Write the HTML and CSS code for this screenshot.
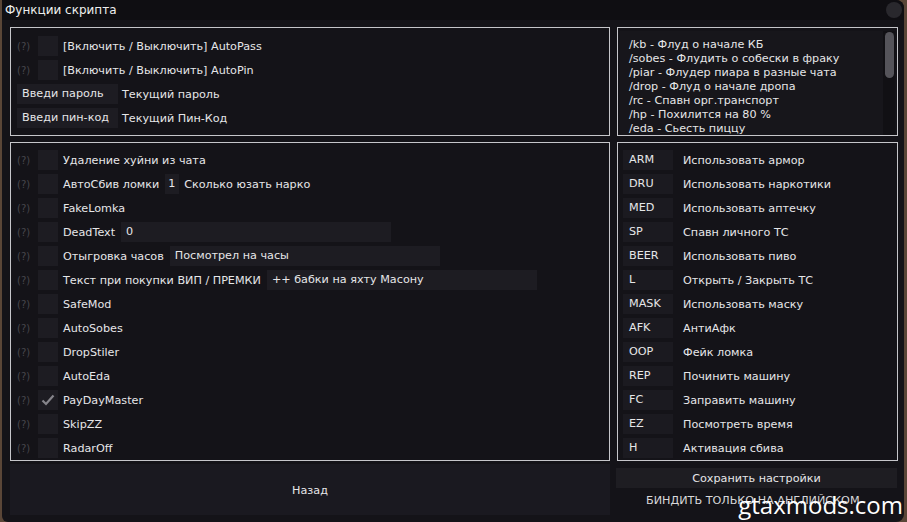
FILE: index.html
```html
<!DOCTYPE html>
<html lang="ru">
<head>
<meta charset="utf-8">
<title>Функции скрипта</title>
<link rel="stylesheet" href="styles.css">
</head>
<body>
<div class="window">
  <div class="titlebar">
    <span class="title">Функции скрипта</span>
    <span class="close"></span>
  </div>
  <div class="content">
    <section class="panel panel-auth">
      <div class="row"><span class="help">(?)</span><span class="check"></span><span class="label">[Включить / Выключить] AutoPass</span></div>
      <div class="row"><span class="help">(?)</span><span class="check"></span><span class="label">[Включить / Выключить] AutoPin</span></div>
      <div class="row"><span class="field field-short">Введи пароль</span><span class="label">Текущий пароль</span></div>
      <div class="row"><span class="field field-short">Введи пин-код</span><span class="label">Текущий Пин-Код</span></div>
    </section>

    <section class="panel panel-cmds">
      <div class="cmd-child">
        <div class="cmd-text">
          <div>/kb - Флуд о начале КБ</div>
          <div>/sobes - Флудить о собески в фраку</div>
          <div>/piar - Флудер пиара в разные чата</div>
          <div>/drop - Флуд о начале дропа</div>
          <div>/rc - Спавн орг.транспорт</div>
          <div>/hp - Похилится на 80 %</div>
          <div>/eda - Сьесть пиццу</div>
        </div>
        <div class="scrollbar"><div class="thumb"></div></div>
      </div>
    </section>

    <section class="panel panel-funcs">
      <div class="row"><span class="help">(?)</span><span class="check"></span><span class="label">Удаление хуйни из чата</span></div>
      <div class="row"><span class="help">(?)</span><span class="check"></span><span class="label">АвтоСбив ломки</span><span class="field field-num">1</span><span class="label">Сколько юзать нарко</span></div>
      <div class="row"><span class="help">(?)</span><span class="check"></span><span class="label">FakeLomka</span></div>
      <div class="row"><span class="help">(?)</span><span class="check"></span><span class="label">DeadText</span><span class="field field-wide">0</span></div>
      <div class="row"><span class="help">(?)</span><span class="check"></span><span class="label">Отыгровка часов</span><span class="field field-wide">Посмотрел на часы</span></div>
      <div class="row"><span class="help">(?)</span><span class="check"></span><span class="label">Текст при покупки ВИП / ПРЕМКИ</span><span class="field field-wide">++ бабки на яхту Масону</span></div>
      <div class="row"><span class="help">(?)</span><span class="check"></span><span class="label">SafeMod</span></div>
      <div class="row"><span class="help">(?)</span><span class="check"></span><span class="label">AutoSobes</span></div>
      <div class="row"><span class="help">(?)</span><span class="check"></span><span class="label">DropStiler</span></div>
      <div class="row"><span class="help">(?)</span><span class="check"></span><span class="label">AutoEda</span></div>
      <div class="row"><span class="help">(?)</span><span class="check checked"><svg viewBox="0 0 20 20" width="20" height="20"><polyline points="4.5,10.5 8,14 15.5,5.5" fill="none" stroke="#86858b" stroke-width="2.2"/></svg></span><span class="label">PayDayMaster</span></div>
      <div class="row"><span class="help">(?)</span><span class="check"></span><span class="label">SkipZZ</span></div>
      <div class="row"><span class="help">(?)</span><span class="check"></span><span class="label">RadarOff</span></div>
    </section>

    <section class="panel panel-binds">
      <div class="row"><span class="key">ARM</span><span class="label">Использовать армор</span></div>
      <div class="row"><span class="key">DRU</span><span class="label">Использовать наркотики</span></div>
      <div class="row"><span class="key">MED</span><span class="label">Использовать аптечку</span></div>
      <div class="row"><span class="key">SP</span><span class="label">Спавн личного ТС</span></div>
      <div class="row"><span class="key">BEER</span><span class="label">Использовать пиво</span></div>
      <div class="row"><span class="key">L</span><span class="label">Открыть / Закрыть ТС</span></div>
      <div class="row"><span class="key">MASK</span><span class="label">Использовать маску</span></div>
      <div class="row"><span class="key">AFK</span><span class="label">АнтиАфк</span></div>
      <div class="row"><span class="key">OOP</span><span class="label">Фейк ломка</span></div>
      <div class="row"><span class="key">REP</span><span class="label">Починить машину</span></div>
      <div class="row"><span class="key">FC</span><span class="label">Заправить машину</span></div>
      <div class="row"><span class="key">EZ</span><span class="label">Посмотреть время</span></div>
      <div class="row"><span class="key">H</span><span class="label">Активация сбива</span></div>
    </section>

    <button class="btn btn-back">Назад</button>
    <div class="save-col">
      <button class="btn btn-save">Сохранить настройки</button>
      <div class="note">БИНДИТЬ ТОЛЬКО НА АНГЛИЙСКОМ</div>
    </div>
  </div>
  <div class="watermark">gtaxmods.com</div>
</div>
</body>
</html>
```

FILE: styles.css
```css
* {
  box-sizing: border-box;
  margin: 0;
  padding: 0;
}

html,
body {
  width: 907px;
  height: 522px;
  overflow: hidden;
}

body {
  background: #5a4637;
  font-family: "DejaVu Sans", Verdana, sans-serif;
  font-size: 11.2px;
  color: #e6e6e8;
}

.window {
  position: relative;
  margin-left: 2px;
  width: 902px;
  height: 522px;
  background: #141318;
  border-radius: 0 8px 8px 6px;
  overflow: hidden;
}

.titlebar {
  height: 20px;
  background: #0f0e12;
  display: flex;
  align-items: center;
  justify-content: space-between;
  padding: 0 2px 0 3px;
}

.title {
  font-size: 12px;
  color: #eeeeee;
}

.close {
  width: 16px;
  height: 16px;
  border-radius: 50%;
  background: #29282d;
}

.content {
  display: grid;
  grid-template-columns: 600px 281px;
  column-gap: 7px;
  padding: 7px 0 0 8px;
}

.panel {
  border: 1px solid #c6c6ca;
  overflow: hidden;
}

.panel-auth {
  height: 109px;
  padding: 8px 6px 6px;
}

.panel-cmds {
  height: 109px;
  padding: 3px 2px 0 2px;
}

.panel-funcs,
.panel-binds {
  height: 319px;
  margin-top: 6px;
  padding: 7px 6px 6px;
}

.panel-binds {
  padding-left: 5px;
}

.row {
  display: flex;
  align-items: center;
  height: 20px;
  margin-bottom: 4px;
  gap: 4px;
  white-space: nowrap;
}

.help {
  width: 17px;
  font-size: 10px;
  color: #47464c;
}

.check {
  width: 20px;
  height: 20px;
  flex: none;
  background: #1d1c22;
  margin-right: 1px;
}

.check svg {
  display: block;
}

.label {
  color: #e6e6e8;
}

.field {
  height: 20px;
  line-height: 20px;
  background: #1d1c22;
  padding: 0 5px;
  flex: none;
  overflow: hidden;
  margin-left: 2px;
}

.field-short {
  width: 101px;
  margin-left: 0;
}

.field-wide {
  width: 270px;
}

.field-num {
  width: 14px;
  padding: 0 3px;
  margin-right: 1px;
}

.key {
  width: 50px;
  height: 20px;
  line-height: 20px;
  padding-left: 6px;
  background: #1b1a20;
  margin-right: 6px;
  flex: none;
}

.cmd-child {
  display: flex;
  height: 110px;
  background: #17161b;
}

.cmd-text {
  flex: 1;
  padding: 7px 0 0 9px;
  line-height: 14px;
  color: #e6e6e8;
}

.scrollbar {
  width: 12px;
  background: #111014;
  padding: 1px 1px 0 2px;
}

.thumb {
  width: 9px;
  height: 46px;
  border-radius: 5px;
  background: #55545a;
}

.btn {
  font-family: inherit;
  font-size: 11.2px;
  color: #e6e6e8;
  border: none;
  display: block;
}

.btn-back {
  margin-top: 3px;
  height: 51px;
  padding-top: 2px;
  background: #1a1920;
}

.save-col {
  margin-top: 7px;
  margin-left: -1px;
}

.btn-save {
  width: 281px;
  height: 20px;
  padding-top: 1px;
  background: #1e1d22;
}

.note {
  height: 22px;
  line-height: 22px;
  padding: 2px 0 0 30px;
  color: #d8d8da;
  white-space: nowrap;
}

.watermark {
  position: absolute;
  right: 1px;
  top: 493px;
  font-family: "Open Sans", sans-serif;
  font-size: 24px;
  line-height: 24px;
  color: #ffffff;
}
```
